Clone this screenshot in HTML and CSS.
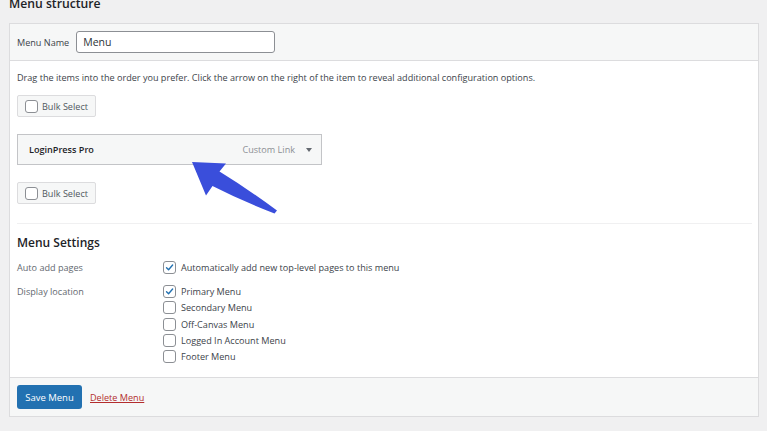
FILE: index.html
```html
<!DOCTYPE html>
<html lang="en">
<head>
<meta charset="utf-8">
<title>Menu structure</title>
<link rel="stylesheet" href="styles.css">
</head>
<body>
<div class="page">
  <h2 class="title">Menu structure</h2>
  <div class="panel">
    <div class="panel-head">
      <label class="name-label" for="menu-name">Menu Name</label>
      <div class="name-input" id="menu-name">Menu</div>
    </div>
    <div class="panel-body">
      <p class="hint">Drag the items into the order you prefer. Click the arrow on the right of the item to reveal additional configuration options.</p>
      <div class="bulk"><span class="cb"></span><span>Bulk Select</span></div>
      <div class="menu-item">
        <span class="item-title">LoginPress Pro</span>
        <span class="item-meta">Custom Link</span>
        <span class="item-arrow"></span>
      </div>
      <div class="bulk bulk-2"><span class="cb"></span><span>Bulk Select</span></div>
      <div class="sep"></div>
      <h3 class="settings-title">Menu Settings</h3>
      <div class="setting setting-auto">
        <div class="setting-label">Auto add pages</div>
        <div class="setting-options">
          <div class="opt"><span class="cb checked"><svg viewBox="0 0 13 13"><path d="M3 6.8 L5.4 9.2 L10.2 3.6" /></svg></span><span>Automatically add new top-level pages to this menu</span></div>
        </div>
      </div>
      <div class="setting setting-loc">
        <div class="setting-label">Display location</div>
        <div class="setting-options">
          <div class="opt"><span class="cb checked"><svg viewBox="0 0 13 13"><path d="M3 6.8 L5.4 9.2 L10.2 3.6" /></svg></span><span>Primary Menu</span></div>
          <div class="opt"><span class="cb"></span><span>Secondary Menu</span></div>
          <div class="opt"><span class="cb"></span><span>Off-Canvas Menu</span></div>
          <div class="opt"><span class="cb"></span><span>Logged In Account Menu</span></div>
          <div class="opt"><span class="cb"></span><span>Footer Menu</span></div>
        </div>
      </div>
    </div>
    <div class="panel-foot">
      <span class="btn-primary">Save Menu</span>
      <a class="delete-link" href="#">Delete Menu</a>
    </div>
  </div>
</div>
<svg class="pointer" viewBox="0 0 767 431" width="767" height="431">
  <path d="M192 162 L226 163.5 L219.5 171.5 Q248 189 277 210.5 L274.5 213.5 Q242 201 212.5 186 L206 195.5 Z" />
</svg>
</body>
</html>
```
FILE: styles.css
```css
* { box-sizing: border-box; }
html, body { margin: 0; padding: 0; }
body {
  background: #f0f0f1;
  font-family: "Open Sans", "Noto Sans", sans-serif;
  font-size: 9.1px;
  color: #3c434a;
  width: 767px;
  height: 431px;
  overflow: hidden;
  position: relative;
}
.page { padding: 0 8px 0 9px; }
.title {
  margin: -5px 0 10px;
  font-size: 12.2px;
  line-height: 18px;
  font-weight: 600;
  color: #1d2327;
}
.panel {
  width: 750px;
  border: 1px solid #dcdcde;
  background: #fff;
}
.panel-head {
  background: #f6f7f7;
  border-bottom: 1px solid #dcdcde;
  height: 37px;
  padding: 0 0 0 7px;
  display: flex;
  align-items: center;
}
.name-label { color: #3c434a; margin-right: 7px; }
.name-input {
  width: 199px;
  height: 22px;
  border: 1px solid #8c8f94;
  border-radius: 3px;
  background: #fff;
  font-size: 10.5px;
  color: #2c3338;
  padding-left: 6px;
  display: flex;
  align-items: center;
}
.panel-body { padding: 0 6px 14px 7px; }
.hint { margin: 10px 0 10px; line-height: 14px; }
.bulk {
  width: 79px;
  height: 22px;
  border: 1px solid #dcdcde;
  border-radius: 2px;
  background: #f6f7f7;
  display: flex;
  align-items: center;
  gap: 4px;
  padding-left: 7px;
  color: #50575e;
}
.bulk-2 { margin-top: 17px; }
.cb {
  width: 13px;
  height: 13px;
  border: 1px solid #8c8f94;
  border-radius: 3px;
  background: #fff;
  flex: 0 0 auto;
  display: flex;
}
.cb svg { width: 11px; height: 11px; }
.cb path { fill: none; stroke: #2271b1; stroke-width: 1.6; stroke-linecap: round; stroke-linejoin: round; }
.menu-item {
  margin-top: 17px;
  width: 305px;
  height: 31px;
  border: 1px solid #c3c4c7;
  background: #f6f7f7;
  display: flex;
  align-items: center;
  padding: 0 9px 0 11px;
}
.item-title { font-weight: 600; color: #1d2327; flex: 1; }
.item-meta { color: #8c8f94; margin-right: 11px; }
.item-arrow {
  width: 0; height: 0;
  border-left: 3.5px solid transparent;
  border-right: 3.5px solid transparent;
  border-top: 4.5px solid #646970;
}
.sep { margin-top: 19px; border-top: 1px solid #f0f0f1; }
.settings-title {
  margin: 10px 0 9px;
  font-size: 12px;
  line-height: 18px;
  font-weight: 600;
  color: #1d2327;
}
.setting { display: flex; }
.setting-loc { margin-top: 11px; }
.setting-label { width: 146px; color: #646970; line-height: 13px; }
.setting-options { display: flex; flex-direction: column; gap: 3.3px; }
.opt { display: flex; align-items: center; gap: 5px; line-height: 13px; color: #3c434a; }
.panel-foot {
  background: #f6f7f7;
  border-top: 1px solid #dcdcde;
  padding: 7px 7px 7px;
  display: flex;
  align-items: center;
  gap: 8px;
}
.btn-primary {
  width: 65px;
  height: 24px;
  background: #2271b1;
  border-radius: 3px;
  color: #fff;
  font-size: 9.5px;
  display: flex;
  align-items: center;
  justify-content: center;
}
.delete-link { color: #b32d2e; text-decoration: underline; font-size: 9.1px; }
.pointer { position: absolute; left: 0; top: 0; pointer-events: none; }
.pointer path { fill: #3a4edb; }
```
